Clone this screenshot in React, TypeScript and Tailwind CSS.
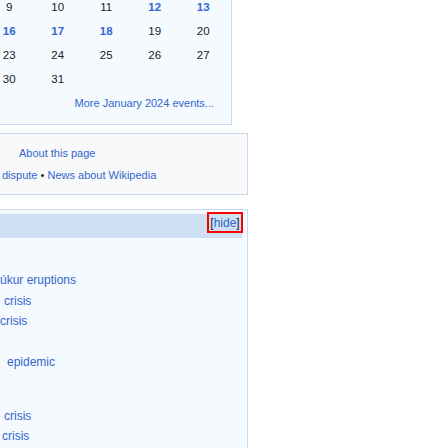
const blue = "text-[#3366cc]";

const weeks: { d: number; link?: boolean }[][] = [
  [{ d: 9 }, { d: 10 }, { d: 11 }, { d: 12, link: true }, { d: 13, link: true }],
  [{ d: 16, link: true }, { d: 17, link: true }, { d: 18, link: true }, { d: 19 }, { d: 20 }],
  [{ d: 23 }, { d: 24 }, { d: 25 }, { d: 26 }, { d: 27 }],
  [{ d: 30 }, { d: 31 }],
];

export default function App() {
  return (
    <div className="h-[448px] w-[448px] overflow-hidden bg-white font-['Liberation_Sans',Arial,sans-serif] text-[#202122]">
      {/* calendar box */}
      <div className="h-[125px] w-[232px] overflow-hidden border-b border-r border-[#c8daf0] bg-[#f5faff]">
        <div className="-mt-[5px] ml-[-15px]">
          {weeks.map((w, i) => (
            <div key={i} className="flex h-[24px] items-center text-[11.5px] leading-[24px]">
              {w.map((c) => (
                <span key={c.d} className={`w-[48.5px] shrink-0 text-center ${c.link ? `${blue} font-bold` : "text-[#202122]"}`}>
                  {c.d}
                </span>
              ))}
            </div>
          ))}
        </div>
        <div className={`flex h-[24px] items-center justify-end pr-[17px] text-[11px] ${blue}`}>
          More January 2024 events...
        </div>
      </div>

      {/* about box */}
      <div className="mt-[8px] h-[62px] w-[248px] border-y border-r border-[#c8daf0] bg-[#f8f9fa] pt-[8px] text-[11px] leading-[22px]">
        <div className={`pl-[19px] ${blue}`}>About this page</div>
        <div className={`pl-[2px] ${blue}`}>
          dispute <span className="text-[#202122]">•</span> News about Wikipedia
        </div>
      </div>

      {/* ongoing box */}
      <div className="mt-[14px] h-[260px] w-[248px] border-r border-t border-[#c8daf0] bg-[#f5faff] pr-[5px] pt-[4px]">
        <div className="relative h-[24px] bg-[#cee0f2]">
          <span className="absolute -top-[2px] right-[-1px] flex h-[21px] w-[36px] items-center justify-center border-2 border-[#ff0000] text-[12px]">
            [<span className={blue}>hide</span>]
          </span>
        </div>
        <div className={`pt-[32px] text-[12px] leading-[20.5px] ${blue}`}>
          <div className="whitespace-nowrap">úkur eruptions</div>
          <div className="whitespace-nowrap pl-[4px]">crisis</div>
          <div className="whitespace-nowrap">crisis</div>
          <div className="mt-[20.5px] whitespace-nowrap pl-[7px]">epidemic</div>
          <div className="mt-[33px] whitespace-nowrap pl-[4px]">crisis</div>
          <div className="whitespace-nowrap pl-[2px]">crisis</div>
        </div>
      </div>
    </div>
  );
}
